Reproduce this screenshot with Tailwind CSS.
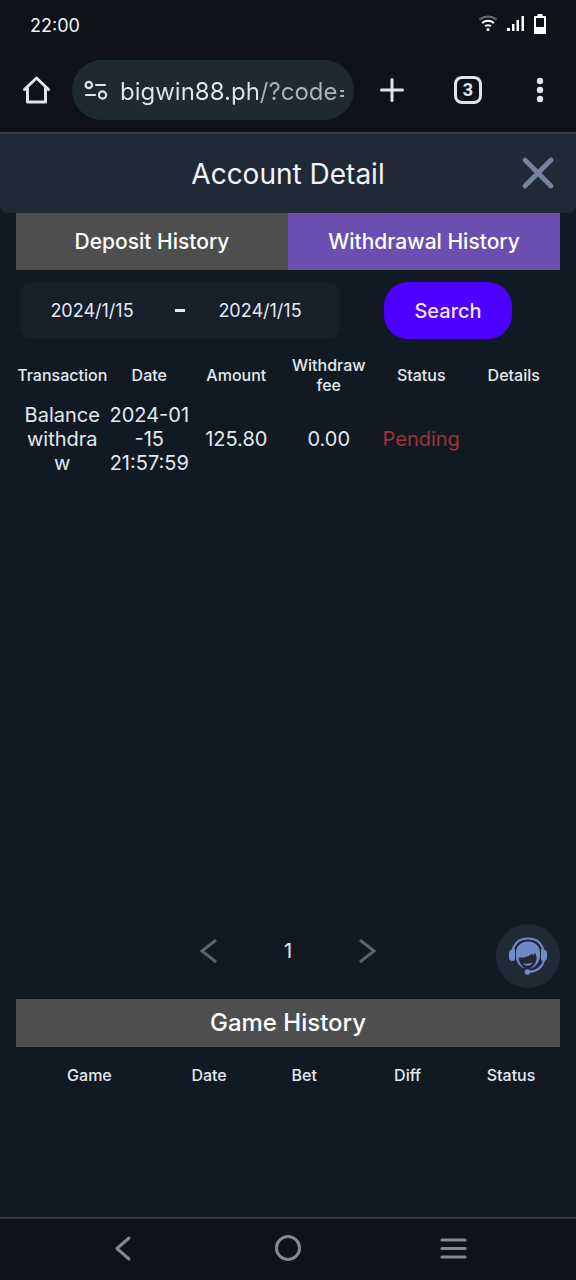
<!DOCTYPE html>
<html lang="en">
<head>
<meta charset="utf-8">
<meta name="viewport" content="width=device-width, initial-scale=1">
<title>Account Detail</title>
<script src="https://cdn.jsdelivr.net/npm/@tailwindcss/browser@4"></script>
</head>
<body class="flex min-h-screen flex-col bg-[#111a22] font-['Inter','Liberation_Sans',sans-serif] text-[#e4e8ef]">

<!-- Phone status bar and browser toolbar -->
<div class="border-b-2 border-[#3b3d48] bg-[#0f121b]">
  <div class="flex h-12 items-center justify-between pr-[30px] pl-[30px]">
    <span class="pt-1 text-lg text-[#f2f3f5]">22:00</span>
    <div class="flex items-center gap-2 text-white">
      <svg class="h-5 w-5" viewBox="0 0 20 20" fill="none" stroke="currentColor" stroke-width="2" aria-hidden="true">
        <path d="M1.500 5.500Q10-.5 18.500 5.500" stroke="#6d7078"/>
        <path d="M4 9Q10 4.500 16 9M7 12.300Q10 10.200 13 12.300"/>
        <circle cx="10" cy="15.500" r="1.500" fill="currentColor" stroke="none"/>
      </svg>
      <svg class="h-5 w-5" viewBox="0 0 20 20" fill="currentColor" aria-hidden="true">
        <path d="M1 14h3v3H1zM6 10h2.500v7H6zM10.500 6H13v11h-2.500zM15.500 2H18v15h-2.500z"/>
      </svg>
      <svg class="h-5 w-3" viewBox="0 0 12 20" aria-hidden="true">
        <path d="M3.500 0h5v2H11q1 0 1 1v16q0 1-1 1H1q-1 0-1-1V3q0-1 1-1h2.500z" fill="currentColor"/>
        <path d="M2 4h8v9H2z" fill="#0f121b"/>
      </svg>
    </div>
  </div>
  <div class="flex h-[84px] items-center pr-[22px] pl-5">
    <button type="button" aria-label="Home" class="text-[#e2e3e8]">
      <svg class="h-8 w-8" viewBox="0 0 32 32" fill="none" stroke="currentColor" stroke-width="3" stroke-linejoin="round" stroke-linecap="round">
        <path d="M4.500 15.500 16.500 4l12 11.500M7.500 14v14h18V14"/>
      </svg>
    </button>
    <div class="ml-5 flex h-15 min-w-0 flex-1 items-center rounded-full bg-[#1e2933] pr-[10px] pl-3">
      <svg class="h-6 w-6 shrink-0 text-[#dfe3e8]" viewBox="0 0 24 24" fill="none" stroke="currentColor" stroke-width="2.200" stroke-linecap="round" aria-hidden="true">
        <circle cx="4.800" cy="7" r="3.200"/><path d="M12 7h9M2 17h9"/><circle cx="18.500" cy="17" r="3.600"/>
      </svg>
      <input aria-label="Address" value="bigwin88.ph/?code=" class="ml-3 w-full min-w-0 bg-linear-to-r from-[#dfe5ea] from-[140px] to-[#a9b4bf] to-[140px] bg-clip-text pt-1 text-2xl text-transparent outline-none">
    </div>
    <button type="button" aria-label="New tab" class="ml-6 text-[#e2e3e8]">
      <svg class="h-7 w-7" viewBox="0 0 28 28" fill="none" stroke="currentColor" stroke-width="3" stroke-linecap="round"><path d="M14 3.500v21M3.500 14h21"/></svg>
    </button>
    <button type="button" aria-label="3 open tabs" class="ml-12 flex h-7 w-7 items-center justify-center rounded-lg border-3 border-[#e2e3e8] font-[Roboto,sans-serif] text-lg leading-none font-bold text-[#e2e3e8]">3</button>
    <button type="button" aria-label="Menu" class="ml-11 text-[#e2e3e8]">
      <svg class="h-7 w-7" viewBox="0 0 28 28" fill="currentColor"><circle cx="14" cy="5" r="3.200"/><circle cx="14" cy="14" r="3.200"/><circle cx="14" cy="23" r="3.200"/></svg>
    </button>
  </div>
</div>

<!-- Page title -->
<header class="relative flex h-[79px] items-center justify-center rounded-b-lg bg-[#212936]">
  <h1 class="text-[28px] text-[#f3f5fa]">Account Detail</h1>
  <button type="button" aria-label="Close" class="absolute right-5 text-[#74839f]">
    <svg class="h-9 w-9" viewBox="0 0 36 36" fill="none" stroke="currentColor" stroke-width="4.800" stroke-linecap="round"><path d="M5 4 31 30M31 4 5 30"/></svg>
  </button>
</header>

<main class="flex flex-1 flex-col px-4">
  <div role="tablist" class="grid h-[57px] grid-cols-2 text-[21px] font-medium text-white">
    <button type="button" role="tab" aria-selected="false" class="bg-[#4e4e4e]">Deposit History</button>
    <button type="button" role="tab" aria-selected="true" class="bg-[#6a4fb0]">Withdrawal History</button>
  </div>

  <form class="mt-3 flex items-center px-1">
    <div class="flex h-[57px] w-80 items-center justify-between rounded-xl bg-[#171f2b] pr-7 pl-3 text-lg">
      <input aria-label="From date" value="2024/1/15" class="w-30 text-center outline-none">
      <span class="h-[3px] w-[10px] bg-[#e4e8ef]"></span>
      <input aria-label="To date" value="2024/1/15" class="w-26 text-center outline-none">
    </div>
    <button type="button" class="ml-11 h-[57px] w-32 rounded-3xl bg-[#4c00ff] text-xl font-medium text-[#f3e6ff]">Search</button>
  </form>

  <table class="mt-4 w-full table-fixed text-center">
    <colgroup><col class="w-[17%]"><col class="w-[15%]"><col class="w-[17%]"><col class="w-[17%]"><col class="w-[17%]"><col class="w-[17%]"></colgroup>
    <thead class="text-base leading-5">
      <tr class="h-10 *:p-0 *:font-medium">
        <th>Transaction</th><th>Date</th><th>Amount</th><th>Withdraw fee</th><th>Status</th><th>Details</th>
      </tr>
    </thead>
    <tbody class="text-xl leading-6">
      <tr class="h-22 *:p-0">
        <td>Balance<br>withdra<br>w</td>
        <td>2024-01<br>-15<br>21:57:59</td>
        <td>125.80</td>
        <td>0.00</td>
        <td class="text-[#a03238]">Pending</td>
        <td></td>
      </tr>
    </tbody>
  </table>

  <nav aria-label="Pagination" class="mt-auto flex items-center justify-center gap-14 text-xl">
    <button type="button" aria-label="Previous page" class="text-[#59626e]">
      <svg class="h-8 w-8" viewBox="0 0 32 32" fill="none" stroke="currentColor" stroke-width="3"><path d="M24 5 10 16l14 11"/></svg>
    </button>
    <span class="w-4 text-center">1</span>
    <button type="button" aria-label="Next page" class="text-[#59626e]">
      <svg class="h-8 w-8" viewBox="0 0 32 32" fill="none" stroke="currentColor" stroke-width="3"><path d="m8 5 14 11L8 27"/></svg>
    </button>
  </nav>

  <section class="mt-8 h-[218px]">
    <h2 class="flex h-12 items-center justify-center bg-[#4e4e4e] text-2xl font-medium text-white">Game History</h2>
    <table class="mt-2 w-full table-fixed text-center">
      <colgroup><col class="w-[27%]"><col class="w-[17%]"><col class="w-[18%]"><col class="w-[20%]"><col class="w-[18%]"></colgroup>
      <thead class="text-base">
        <tr class="h-10 *:p-0 *:font-medium"><th>Game</th><th>Date</th><th>Bet</th><th>Diff</th><th>Status</th></tr>
      </thead>
    </table>
  </section>
</main>

<!-- Floating support button -->
<button type="button" aria-label="Customer support" class="fixed right-4 bottom-[292px] flex h-16 w-16 items-center justify-center rounded-full bg-[#202a37] text-[#7289c8]">
  <svg class="h-10 w-10" viewBox="0 0 40 40" fill="none" stroke="currentColor">
    <path d="M4.500 16C6 6 12 2.500 20 2.500S34 6 35.500 16" stroke-width="2.200"/>
    <path d="M5 13q-4 1-4 4v5q0 3 4 3 2 0 2-2v-10zM35 13q4 1 4 4v5q0 3-4 3-2 0-2-2v-10z" fill="currentColor" stroke="none"/>
    <path d="M8 20C7 11 12 5.500 20 5.500S33 11 32 20C31.500 26 28 31 22 33c4-3 7-7 6.500-12L27 16.500l-2 3.500-.5-2.500C20 21 15 22 10.500 21.500 11 26 13 30 17 32.500 11 31 8 26 8 20Z" fill="currentColor" stroke="none"/>
    <path d="M15.500 28q5 3.500 9-1-4.500 1.500-9 1Z" fill="currentColor" stroke-width=".6"/>
    <path d="M36 24c-1.500 7-7 11.500-16 12" stroke-width="2"/>
    <circle cx="19.500" cy="36" r="2.800" fill="currentColor" stroke="none"/>
  </svg>
</button>

<!-- System navigation -->
<nav aria-label="System" class="flex h-[63px] items-center justify-around border-t-2 border-[#33383f] bg-[#0f121b] px-10 pb-1 text-[#85878f]">
  <button type="button" aria-label="Back"><svg class="h-8 w-8" viewBox="0 0 32 32" fill="none" stroke="currentColor" stroke-width="3" stroke-linecap="round" stroke-linejoin="round"><path d="M22 6 10 16.500 22 27"/></svg></button>
  <button type="button" aria-label="Home screen"><svg class="h-8 w-8" viewBox="0 0 32 32" fill="none" stroke="currentColor" stroke-width="3"><circle cx="16" cy="16" r="11.500"/></svg></button>
  <button type="button" aria-label="Recent apps"><svg class="h-8 w-8" viewBox="0 0 32 32" fill="none" stroke="currentColor" stroke-width="3.200" stroke-linecap="round"><path d="M5 8h23M5 16.500h23M5 25h23"/></svg></button>
</nav>
</body>
</html>
